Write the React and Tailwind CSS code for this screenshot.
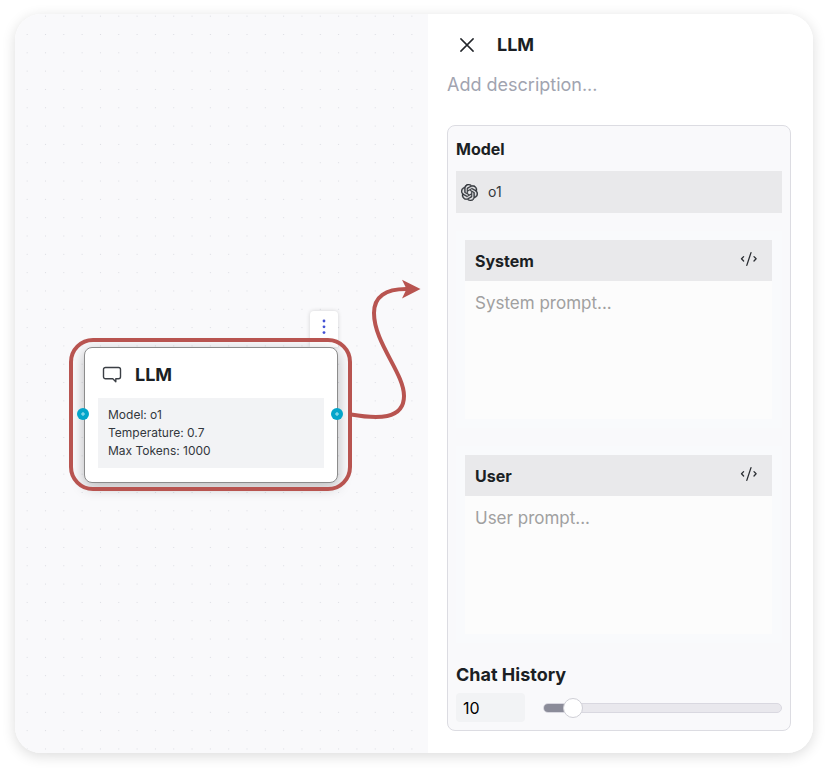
import { useState } from "react";
import { SiOpenai } from "react-icons/si";

function ChatIcon() {
  return (
    <svg width="20" height="18" viewBox="0 0 20 18" fill="none" stroke="#3b3f45" strokeWidth="1.4" strokeLinejoin="round" aria-hidden="true">
      <path d="M3.500 1.500h13a2 2 0 0 1 2 2v7.300a2 2 0 0 1-2 2h-2.700v3l-3-3H3.500a2 2 0 0 1-2-2V3.500a2 2 0 0 1 2-2Z" />
    </svg>
  );
}

function CloseIcon() {
  return (
    <svg width="14" height="14" viewBox="0 0 14 14" fill="none" stroke="#23262b" strokeWidth="1.5" strokeLinecap="round" aria-hidden="true">
      <path d="M.9.9 13.100 13.100M13.100.9.9 13.100" />
    </svg>
  );
}

function CodeIcon() {
  return (
    <svg width="18" height="16" viewBox="0 0 18 16" fill="none" stroke="#2b2e33" strokeWidth="1.3" strokeLinecap="round" strokeLinejoin="round" aria-hidden="true">
      <path d="M3.600 5.600 1.500 7.800l2.100 2.200M14 5.600l2.100 2.200-2.100 2.200M11 1.600 6.800 14.400" />
    </svg>
  );
}

function Handle({ className, label }) {
  return (
    <button
      type="button"
      aria-label={label}
      className={`absolute top-[61px] flex size-3 items-center justify-center rounded-full bg-[#04a5ca] ${className}`}
    >
      <svg width="6" height="6" viewBox="0 0 6 6" stroke="#a9e4f1" strokeWidth="1" aria-hidden="true">
        <path d="M3 1v4M1 3h4" />
      </svg>
    </button>
  );
}

function LlmNode() {
  return (
    <div className="absolute left-[69px] top-[333px] w-[254px]">
      <button
        type="button"
        aria-label="Node menu"
        className="absolute -top-9 right-0 flex h-9 w-7 justify-center rounded-t bg-white pt-2 shadow-[0_0_4px_rgba(0,0,0,0.16)]"
      >
        <svg width="4" height="16" viewBox="0 0 4 16" fill="#4250d4" aria-hidden="true">
          <circle cx="2" cy="2" r="1.400" />
          <circle cx="2" cy="7.800" r="1.400" />
          <circle cx="2" cy="13.600" r="1.400" />
        </svg>
      </button>
      <div className="absolute -left-[15px] -right-[14px] -top-[9px] -bottom-2 z-10 rounded-3xl border-4 border-[#b85450]" />
      <div className="relative rounded-lg border border-[#8c8c8c] bg-white px-[13px] pb-[14px] pt-[11px] shadow-[0_4px_14px_rgba(0,0,0,0.26)]">
        <div className="flex h-8 items-center gap-[13px] pl-1">
          <ChatIcon />
          <h2 className="text-lg font-bold">LLM</h2>
        </div>
        <div className="mt-[7px] bg-[#f2f3f5] px-[10px] py-2 text-xs leading-[18px] text-[#33373d]">
          <p>Model: o1</p>
          <p>Temperature: 0.7</p>
          <p>Max Tokens: 1000</p>
        </div>
      </div>
      <Handle label="Input" className="-left-[7px] z-20" />
      <Handle label="Output" className="-right-[5px] z-20" />
    </div>
  );
}

function Canvas() {
  return (
    <section className="relative flex-1 overflow-hidden bg-[#f9f9fb]">
      <svg className="absolute inset-0 size-full" aria-hidden="true">
        <defs>
          <pattern id="grid-dots" x="3" y="-7" width="18.320" height="18.320" patternUnits="userSpaceOnUse">
            <circle cx="9.160" cy="9.160" r="0.600" fill="#d6d8de" />
          </pattern>
        </defs>
        <rect width="100%" height="100%" fill="url(#grid-dots)" />
      </svg>
      <LlmNode />
      <svg className="absolute left-[335px] top-[261px]" width="76" height="160" viewBox="0 0 76 160" aria-hidden="true">
        <path
          d="M1 139.500C27 144 54 145 54 121C54 98 24 68 24 38C24 22 35 13.500 58 14"
          fill="none"
          stroke="#b85450"
          strokeWidth="4"
        />
        <path d="M70.500 14 52 23.500 56.500 14 52 4.800Z" fill="#b85450" />
      </svg>
    </section>
  );
}

function PromptBox({ id, title, placeholder }) {
  return (
    <div className="bg-[#f9fafc] py-[9px] pl-[9px] pr-[10px]">
      <div className="flex h-[41px] items-center justify-between bg-[#e9e9eb] pl-[10px] pr-[14px]">
        <label htmlFor={id} className="text-base font-bold">{title}</label>
        <button type="button" aria-label={`Edit ${title} as code`} className="pb-1">
          <CodeIcon />
        </button>
      </div>
      <textarea
        id={id}
        placeholder={placeholder}
        className="block h-[138px] w-full resize-none bg-[#fcfcfc] px-[10px] py-2 text-[17px] leading-7 outline-none placeholder:text-[#a0a0a0]"
      />
    </div>
  );
}

function ChatHistory() {
  const [size, setSize] = useState(10);
  const filled = ((size - 1) / 99) * 100;
  return (
    <div>
      <label htmlFor="history" className="block text-lg leading-7 font-bold">Chat History</label>
      <div className="mt-1 flex items-center gap-[18px]">
        <input
          id="history"
          value={size}
          onChange={(e) => setSize(Number(e.target.value) || 1)}
          className="h-[29px] w-[69px] rounded bg-[#f2f3f5] px-[7px] text-base text-black outline-none"
        />
        <div className="relative flex h-5 flex-1 items-center">
          <div className="h-[10px] w-full overflow-hidden rounded-full border border-[#d9d8e0] bg-[#e9e8ed]">
            <div className="-m-px h-[10px] bg-[#8b8c99]" style={{ width: `calc(${filled}% + 10px)` }} />
          </div>
          <input
            type="range"
            aria-label="Chat History"
            min="1"
            max="100"
            value={size}
            onChange={(e) => setSize(Number(e.target.value))}
            className="absolute inset-0 w-full appearance-none bg-transparent outline-none [&::-webkit-slider-thumb]:size-5 [&::-webkit-slider-thumb]:appearance-none [&::-webkit-slider-thumb]:rounded-full [&::-webkit-slider-thumb]:border [&::-webkit-slider-thumb]:border-[#cfcfd6] [&::-webkit-slider-thumb]:bg-white"
          />
        </div>
      </div>
    </div>
  );
}

function SettingsPanel() {
  return (
    <aside className="w-[385px] shrink-0 bg-white pb-[22px] pl-[19px] pr-[22px] pt-[15px]">
      <div className="flex h-8 items-center gap-[23px] pl-[13px]">
        <button type="button" aria-label="Close">
          <CloseIcon />
        </button>
        <h1 className="text-lg font-bold">LLM</h1>
      </div>
      <input
        aria-label="Description"
        placeholder="Add description..."
        className="mt-[10px] block h-7 w-full text-lg outline-none placeholder:text-[#a1a4b0]"
      />
      <div className="mt-[26px] rounded-lg border border-[#dcdce2] bg-[#f9f9fb] p-2">
        <h2 className="pt-[3px] text-base font-bold">Model</h2>
        <button type="button" className="mt-[10px] mb-[18px] flex h-[42px] w-full items-center gap-[10px] bg-[#e9e9eb] px-[5px] text-sm text-[#33373d]">
          <SiOpenai size={17} stroke="currentColor" strokeWidth={0.5} />
          o1
        </button>
        <div className="flex flex-col gap-[18px]">
          <PromptBox id="system" title="System" placeholder="System prompt..." />
          <PromptBox id="user" title="User" placeholder="User prompt..." />
          <ChatHistory />
        </div>
      </div>
    </aside>
  );
}

export default function App() {
  return (
    <div className="min-h-screen bg-white px-[15px] pb-4 pt-[14px] font-['Inter',sans-serif] text-[#1b1f24]">
      <main className="flex overflow-hidden rounded-[26px] shadow-[0_3px_14px_rgba(0,0,0,0.14)]">
        <Canvas />
        <SettingsPanel />
      </main>
    </div>
  );
}
